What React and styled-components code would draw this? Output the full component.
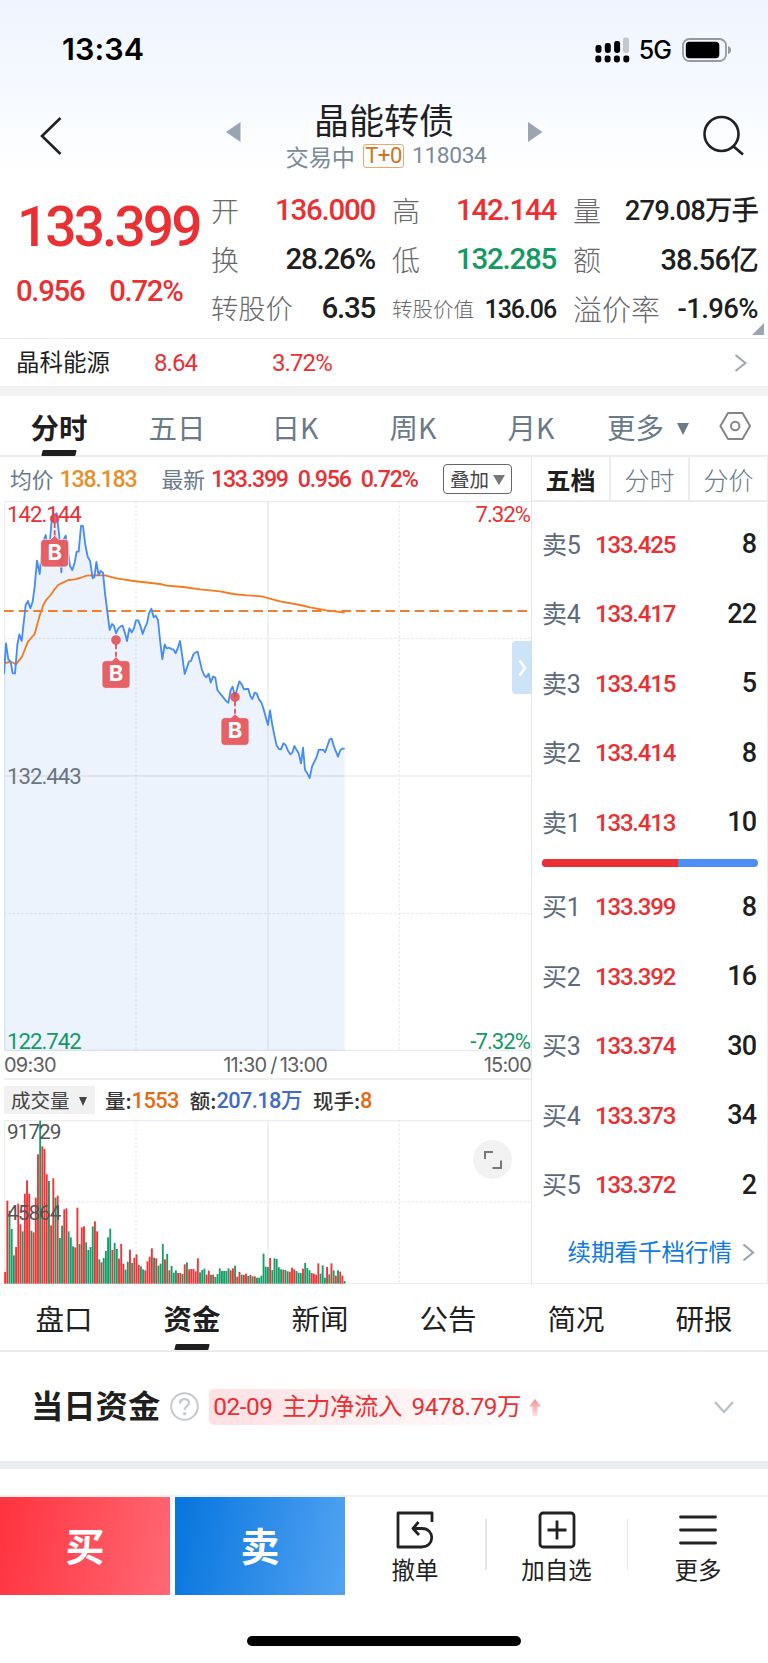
import React from "react";
import styled, { createGlobalStyle } from "styled-components";

const RED = "#ea3033";
const GREEN = "#139a64";
const INK = "#1f1f1f";
const SLATE = "#6b7a88";
const LINE = "#ededed";
const NUMERIC = 'Roboto, "Noto Sans CJK SC", sans-serif';

const GlobalStyle = createGlobalStyle`
  * { box-sizing: border-box; }
  body { margin: 0; background: #fff; }
`;

const Screen = styled.div`
  width: 768px;
  height: 1663px;
  overflow: hidden;
  display: flex;
  flex-direction: column;
  background: #fff;
  color: ${INK};
  font-family: "Noto Sans CJK SC", sans-serif;
  white-space: nowrap;
  line-height: 1;
`;

/* ---------- header ---------- */
const Header = styled.header`
  height: 186px;
  flex: none;
  background: linear-gradient(#eff4ff, #f5f9ff 45%, #fff 95%);
`;
const StatusBar = styled.div`
  height: 98px;
  padding: 1px 37px 0 62px;
  display: flex;
  align-items: center;
  color: #000;
  font-family: Inter, sans-serif;
`;
const Clock = styled.span`
  font-size: 30.5px;
  font-weight: 600;
  letter-spacing: 0.1px;
  margin-right: auto;
`;
const Network = styled.span`
  font-size: 25px;
  font-weight: 500;
  letter-spacing: -0.9px;
  margin: 2px 11px 0 9px;
`;
const NavBar = styled.div`
  height: 88px;
  display: flex;
  align-items: flex-start;
  justify-content: space-between;
  padding: 2px 23px 0 39px;
`;
const NavIcon = styled.svg`
  display: block;
  margin-top: 14px;
`;
const TitleGroup = styled.div`
  width: 318px;
  display: flex;
  justify-content: space-between;
  margin-right: -3px;
`;
const Arrow = styled.svg`
  margin-top: 21px;
`;
const TitleStack = styled.div`
  display: flex;
  flex-direction: column;
  align-items: center;
`;
const Title = styled.h1`
  margin: 0;
  font-size: 35px;
  font-weight: 400;
  line-height: 38px;
`;
const SubTitle = styled.div`
  display: flex;
  align-items: center;
  gap: 8px;
  margin: 5px 0 0 4px;
  font-size: 23.2px;
  line-height: 24px;
  color: #7c8a98;
`;
const TradeTag = styled.span`
  width: 41px;
  height: 24px;
  border: 1.5px solid #e9ab6c;
  border-radius: 3px;
  color: #d1761c;
  font-family: ${NUMERIC};
  font-size: 22px;
  line-height: 22px;
  text-align: center;
  letter-spacing: -0.4px;
`;
const Code = styled.span`
  font-family: ${NUMERIC};
  font-size: 22.8px;
  letter-spacing: -0.4px;
  padding-top: 1px;
`;

/* ---------- quote ---------- */
const Quote = styled.section`
  height: 153px;
  flex: none;
  display: flex;
  position: relative;
  border-bottom: 1px solid ${LINE};
`;
const PriceBlock = styled.div`
  width: 211px;
  color: ${RED};
  padding-left: 17px;
  font-family: ${NUMERIC};
`;
const Price = styled.div`
  font-size: 55px;
  font-weight: 500;
  letter-spacing: -2.9px;
  line-height: 60px;
  margin-top: 11px;
`;
const Changes = styled.div`
  display: flex;
  gap: 25px;
  font-size: 29.3px;
  font-weight: 500;
  line-height: 30px;
  margin: 19px 0 0 -1px;
  letter-spacing: -1.3px;
`;
const QuoteGrid = styled.div`
  display: grid;
  grid-template-columns: 164px 164px 185px;
  column-gap: 17px;
  grid-template-rows: repeat(3, 49px);
`;
const QuoteCell = styled.div`
  display: flex;
  justify-content: space-between;
  align-items: center;
  padding: 0 0 1px;
`;
const QuoteLabel = styled.span`
  font-size: ${(p) => p.$size || 28}px;
  font-weight: 300;
  color: #686868;
`;
const QuoteValue = styled.span`
  font-family: ${NUMERIC};
  font-size: ${(p) => p.$size || 29.5}px;
  font-weight: 500;
  letter-spacing: ${(p) => p.$track || -1.25}px;
  color: ${(p) => p.$color || INK};
  padding-top: 2px;
`;
const Corner = styled.svg`
  position: absolute;
  right: 4px;
  bottom: 3px;
`;
const StockRow = styled.div`
  height: 47px;
  flex: none;
  display: flex;
  align-items: center;
  padding: 0 21px 2px 16px;
`;
const StockName = styled.span`
  width: 138px;
  font-size: 23.5px;
  padding-top: 1px;
`;
const StockFigure = styled.span`
  width: ${(p) => p.$w}px;
  font-family: ${NUMERIC};
  font-size: 24px;
  color: ${RED};
  letter-spacing: -0.9px;
  padding-top: 2px;
`;
const PushRight = styled.svg`
  margin-left: auto;
  margin-top: 2px;
`;
const Band = styled.div`
  height: ${(p) => p.$h}px;
  flex: none;
  background: ${(p) => p.$color};
`;

/* ---------- period tabs ---------- */
const PeriodTabs = styled.nav`
  height: 61px;
  flex: none;
  display: flex;
  border-bottom: 2px solid ${LINE};
`;
const PeriodTab = styled.div`
  position: relative;
  width: ${(p) => p.$w || 118}px;
  height: 60px;
  display: flex;
  align-items: center;
  justify-content: center;
  gap: 13px;
  padding-top: 2px;
  font-size: 28.5px;
  font-weight: ${(p) => (p.$on ? 700 : 400)};
  color: ${(p) => (p.$on ? INK : SLATE)};
  &::after {
    content: "";
    display: ${(p) => (p.$on ? "block" : "none")};
    position: absolute;
    bottom: 0;
    left: 42px;
    width: 34px;
    height: 6px;
    background: ${INK};
    transform: skewX(-14deg);
    border-radius: 1px;
  }
`;
const DownMark = styled.i`
  border: ${(p) => p.$w / 2}px solid transparent;
  border-bottom: 0;
  border-top: ${(p) => p.$h}px solid ${(p) => p.$color};
  margin-top: ${(p) => p.$top || 0}px;
`;

/* ---------- chart area ---------- */
const Market = styled.section`
  flex: none;
  height: 827px;
  display: flex;
  border-bottom: 1px solid ${LINE};
`;
const ChartSide = styled.div`
  width: 532px;
  padding-left: 4px;
  position: relative;
  border-right: 1px solid #e4e6e8;
`;
const InfoRow = styled.div`
  height: 44px;
  display: flex;
  align-items: center;
  padding: 0 19px 0 6px;
  font-size: 21.8px;
  color: ${SLATE};
`;
const InfoValue = styled.span`
  font-family: ${NUMERIC};
  font-size: 23.2px;
  font-weight: 500;
  letter-spacing: -1.25px;
  color: ${(p) => p.$color};
  margin-left: ${(p) => p.$ml}px;
  padding-top: 2px;
`;
const InfoLabel = styled.span`
  margin-left: ${(p) => p.$ml || 0}px;
`;
const Overlay = styled.div`
  margin-left: auto;
  width: 69px;
  height: 30px;
  border: 1.5px solid #666;
  border-radius: 4px;
  display: flex;
  align-items: center;
  justify-content: center;
  gap: 4px;
  padding-bottom: 1px;
  font-size: 19.5px;
  color: #444;
`;
const PlotBox = styled.div`
  position: relative;
  height: ${(p) => p.$h}px;
`;
const Plot = styled.svg`
  display: block;
`;
const MarkerLayer = styled.svg`
  position: absolute;
  left: 0;
  top: 0;
`;
const AxisMark = styled.span`
  position: absolute;
  ${(p) => (p.$right ? "right: 1px;" : `left: ${p.$left || 3}px;`)}
  top: ${(p) => p.$top}px;
  font-family: ${NUMERIC};
  font-size: ${(p) => p.$size || 22.2}px;
  line-height: 18px;
  letter-spacing: -1px;
  color: ${(p) => p.$color};
`;
const TimeAxis = styled.div`
  height: 29px;
  display: flex;
  justify-content: space-between;
  align-items: center;
  padding: 0;
  border-bottom: 2px solid #f0f0f0;
  font-family: Inter, sans-serif;
  font-size: 20px;
  letter-spacing: -0.8px;
  color: #606060;
`;
const MidTime = styled.span`
  padding-left: 11px;
`;
const Slash = styled.span`
  margin: 0 3px 0 4px;
`;
const VolumeHead = styled.div`
  height: 40px;
  display: flex;
  align-items: center;
  font-size: 20.5px;
`;
const Indicator = styled.div`
  width: 91px;
  height: 28px;
  background: #f1f1f1;
  color: #444;
  font-size: 19.5px;
  display: flex;
  align-items: center;
  gap: 9px;
  padding: 0 0 1px 7px;
  margin-right: 10px;
`;
const VolumeItem = styled.span`
  display: flex;
  align-items: center;
  font-weight: 500;
  color: #333;
  margin-right: 11px;
`;
const VolumeValue = styled.span`
  font-family: ${NUMERIC};
  font-weight: 500;
  font-size: 21.8px;
  letter-spacing: -0.6px;
  color: ${(p) => p.$color};
  padding-top: 1px;
`;
const SideHandle = styled.div`
  position: absolute;
  right: -1px;
  top: 184px;
  width: 20px;
  height: 53px;
  border-radius: 4px 0 0 4px;
  background: #cde3f8;
  display: flex;
  align-items: center;
  justify-content: center;
`;
const Expand = styled.div`
  position: absolute;
  left: 469px;
  top: 20px;
  width: 39px;
  height: 39px;
  border-radius: 50%;
  background: #f2f2f2;
  display: flex;
  align-items: center;
  justify-content: center;
`;

/* ---------- order book ---------- */
const Book = styled.aside`
  width: 236px;
  border-right: 1px solid ${LINE};
`;
const BookTabs = styled.div`
  height: 45px;
  display: flex;
  border-bottom: 2px solid ${LINE};
`;
const BookTab = styled.div`
  flex: 1;
  display: flex;
  align-items: center;
  justify-content: center;
  padding-top: 2px;
  font-size: 25px;
  font-weight: ${(p) => (p.$on ? 700 : 300)};
  color: ${(p) => (p.$on ? INK : SLATE)};
  & + & { border-left: 2px solid ${LINE}; }
`;
const Levels = styled.div`
  padding-top: ${(p) => p.$top}px;
`;
const Level = styled.div`
  height: 69.5px;
  display: flex;
  align-items: center;
  padding: 0 11px 0 10px;
`;
const LevelName = styled.span`
  width: 53px;
  font-family: ${NUMERIC};
  font-size: 25px;
  letter-spacing: -0.3px;
  color: #5d6b7a;
  padding-top: 1px;
`;
const LevelPrice = styled.span`
  font-family: ${NUMERIC};
  font-size: 24px;
  font-weight: 500;
  letter-spacing: -1.2px;
  color: ${RED};
`;
const LevelQty = styled.span`
  margin-left: auto;
  font-family: ${NUMERIC};
  font-size: 27px;
  font-weight: 500;
  letter-spacing: -1px;
`;
const Ratio = styled.div`
  height: 8px;
  margin: 1px 9px 0 10px;
  border-radius: 4px;
  overflow: hidden;
  display: flex;
  background: #4c8df6;
`;
const RatioSell = styled.div`
  width: 136px;
  background: #ea3033;
`;
const MoreDepth = styled.div`
  height: 62px;
  padding: 2px 12px 0 0;
  display: flex;
  align-items: center;
  justify-content: flex-end;
  gap: 10px;
  color: #0f7ae0;
  font-size: 23.5px;
`;

/* ---------- detail tabs & funds ---------- */
const DetailTabs = styled.nav`
  height: 68px;
  flex: none;
  display: flex;
  border-bottom: 2px solid #ececec;
`;
const DetailTab = styled.div`
  position: relative;
  flex: 1;
  display: flex;
  align-items: center;
  justify-content: center;
  padding-top: 3px;
  font-size: 28.5px;
  font-weight: ${(p) => (p.$on ? 700 : 400)};
  &::after {
    content: "";
    display: ${(p) => (p.$on ? "block" : "none")};
    position: absolute;
    bottom: 0;
    left: 47px;
    width: 34px;
    height: 6px;
    background: ${INK};
    transform: skewX(-14deg);
    border-radius: 1px;
  }
`;
const Funds = styled.section`
  height: 109px;
  flex: none;
  display: flex;
  align-items: center;
  padding: 0 34px 0 31px;
`;
const FundsTitle = styled.h2`
  margin: 0 10px 4px 0;
  font-size: 32.3px;
  font-weight: 700;
`;
const FlowPill = styled.div`
  margin-left: 10px;
  width: 340px;
  height: 36px;
  padding: 1px 0 0 4px;
  border-radius: 5px;
  display: flex;
  align-items: center;
  gap: 8px;
  font-family: ${NUMERIC};
  font-size: 24.4px;
  letter-spacing: -0.45px;
  word-spacing: 4px;
  color: ${RED};
  background: linear-gradient(90deg, #ffe0e3, #fff0f1 50%, #fff);
`;

/* ---------- action bar ---------- */
const ActionBar = styled.footer`
  margin-top: 26px;
  height: 100px;
  flex: none;
  display: flex;
  border-top: 2px solid #f0f0f0;
`;
const TradeButton = styled.div`
  width: 170px;
  height: 98px;
  margin-right: ${(p) => p.$gap || 0}px;
  display: flex;
  align-items: center;
  justify-content: center;
  padding-bottom: 4px;
  font-size: 39px;
  font-weight: 700;
  color: #fff;
  background: linear-gradient(100deg, ${(p) => p.$from}, ${(p) => p.$to});
`;
const Action = styled.div`
  flex: 1;
  height: 98px;
  display: flex;
  flex-direction: column;
  align-items: center;
  padding-top: 14px;
  font-size: 23.5px;
`;
const ActionIcon = styled.svg`
  flex: none;
  width: 38px;
  height: 38px;
  fill: none;
  stroke: #222;
  stroke-width: 2.8px;
`;
const ActionText = styled.span`
  margin-top: 6px;
  line-height: 28px;
`;
const Rule = styled.i`
  width: 1.5px;
  height: 51px;
  margin-top: 22px;
  background: #e6e6e6;
`;
const HomeArea = styled.div`
  flex: 1;
  display: flex;
  justify-content: center;
  align-items: flex-end;
  padding-bottom: 17px;
`;
const HomeBar = styled.div`
  width: 274px;
  height: 10px;
  border-radius: 5px;
  background: #000;
`;

/* Series are in 1/3 px units, matching the plots' viewBox. */
const PRICE = "12,552 18,460 25,508 32,515 38,550 45,550 52,465 58,433 65,453 77,345 84,333 91,355 98,335 104,290 111,212 119,252 128,160 137,135 143,170 150,150 156,80 170,70 178,140 184,247 190,150 197,137 203,180 210,228 217,240 224,218 230,185 236,185 243,108 249,108 256,165 263,200 270,212 278,265 283,262 289,216 296,255 302,243 309,248 315,310 322,365 329,420 336,402 342,408 348,430 355,415 362,409 368,407 375,430 381,453 388,415 395,427 402,415 408,391 415,391 422,410 428,432 435,412 441,400 447,370 454,356 461,382 467,377 474,390 480,450 487,508 494,463 500,475 508,473 515,478 520,478 527,490 534,472 540,453 547,500 554,552 560,535 567,515 573,513 580,493 587,487 593,485 600,515 606,540 613,556 619,562 626,551 632,578 639,560 646,563 652,600 660,610 668,620 678,633 685,638 692,600 698,590 705,620 711,598 718,574 725,583 732,598 739,597 745,597 751,618 757,627 764,608 770,610 777,628 784,637 790,655 797,680 804,705 810,661 817,705 824,740 830,767 837,777 843,778 850,760 857,765 864,782 871,793 877,788 883,768 890,780 896,790 903,820 909,773 915,840 922,850 929,864 936,830 943,815 949,803 956,780 962,779 970,780 975,787 982,768 989,748 995,746 1002,770 1008,785 1014,800 1021,780 1028,776 1034,776";
const AVERAGE = "12,520 28,516 40,518 47,524 66,500 84,455 104,432 118,380 130,345 140,328 152,315 164,298 174,285 190,277 206,270 224,268 240,264 260,257 280,256 315,256 350,265 400,273 480,282 500,287 550,291 600,298 660,304 700,312 740,316 785,319 840,334 900,345 930,352 980,361 1034,368";
const VOLUME = "r35 r249 g219 g164 g85 r110 r240 r178 g157 r270 r310 r270 g159 r154 r258 r388 g489 r412 r404 r328 g308 r175 r316 g258 r264 g137 g174 r223 r226 g157 g139 g112 r109 r228 g119 r169 r172 g124 g101 g110 g172 r187 r157 g73 r64 g77 g98 g139 g165 r101 g122 g104 r75 r119 r60 g42 g66 r102 g62 r78 r88 r56 g52 g43 r40 r67 r81 r106 g78 r76 g54 g60 g119 r73 g89 r40 g53 g33 g40 r32 r32 g29 r58 g64 r43 r44 r44 r37 r76 g34 g41 g45 r27 r39 g27 r27 g20 g29 g46 g38 g38 g38 g46 r40 r46 g54 r21 r35 g27 r26 r30 g23 r26 g22 r22 g18 g18 g24 g90 g51 g50 r77 g41 g76 g74 g49 g43 r42 g41 g37 r36 r48 r43 g38 g33 g32 r45 g62 g47 g40 r32 r30 r26 r61 g30 g55 g18 r50 g28 r61 g40 r24 g40 r36 r24 g8"
  .split(" ")
  .map((s) => ({ up: s[0] === "r", h: Number(s.slice(1)) }));

const BUYS = [[164, 86], [348, 450], [705, 621]];

const QUOTES = [
  ["开", "136.000", { $color: RED }],
  ["高", "142.144", { $color: RED }],
  ["量", "279.08万手", { $size: 27.5, $track: -0.95 }],
  ["换", "28.26%", {}],
  ["低", "132.285", { $color: GREEN }],
  ["额", "38.56亿", { $size: 28.8, $track: -0.8 }],
  ["转股价", "6.35", {}, 27.3],
  ["转股价值", "136.06", { $size: 25, $track: -1.1 }, 20.5],
  ["溢价率", "-1.96%", { $size: 27.5, $track: -0.6 }, 29],
];
const SELLS = [["卖5", "133.425", 8], ["卖4", "133.417", 22], ["卖3", "133.415", 5], ["卖2", "133.414", 8], ["卖1", "133.413", 10]];
const BIDS = [["买1", "133.399", 8], ["买2", "133.392", 16], ["买3", "133.374", 30], ["买4", "133.373", 34], ["买5", "133.372", 2]];

function BuyMarker({ x, y }) {
  return (
    <g>
      <line x1={x} x2={x} y1={y + 12} y2={y + 56} stroke="#e0474d" strokeWidth="5" strokeDasharray="16 7" />
      <circle cx={x} cy={y} r="14.5" fill="#e0474d" fillOpacity="0.85" />
      <path
        d={`M${x - 31} ${y + 62}h19l12 -12l12 12h19q11 0 11 11v61q0 11 -11 11h-62q-11 0 -11 -11v-61q0 -11 11 -11z`}
        fill="#e5585d"
        fillOpacity="0.95"
        stroke="#fff"
        strokeOpacity="0.7"
        strokeWidth="3"
      />
      <text x={x} y={y + 124} textAnchor="middle" fontFamily="Inter, sans-serif" fontSize="66" fontWeight="700" fill="#fff">B</text>
    </g>
  );
}

function Grid({ top, height, rows }) {
  const dash = { stroke: "#e3e5e8", strokeWidth: 3, strokeDasharray: "7 6" };
  const solid = { stroke: "#ebecee", strokeWidth: 4 };
  return (
    <g>
      <path d={`M13.5 ${top}v${height}M804 ${top}v${height}M12 ${top + 2}h1581`} {...solid} fill="none" />
      <path d={`M408 ${top}v${height}M1198 ${top}v${height}`} {...dash} fill="none" />
      {rows.map(([y, kind]) => (
        <path key={y} d={`M12 ${y}h1581`} {...(kind === "dash" ? dash : solid)} />
      ))}
    </g>
  );
}

function Chevron({ w, h, color, sw = 2.4 }) {
  return (
    <svg width={w} height={h}>
      <path d={`M1.5 1.5L${w - 2} ${h / 2}L1.5 ${h - 1.5}`} fill="none" stroke={color} strokeWidth={sw} />
    </svg>
  );
}

function LevelList({ rows }) {
  return rows.map(([name, price, qty]) => (
    <Level key={name}>
      <LevelName>{name}</LevelName>
      <LevelPrice>{price}</LevelPrice>
      <LevelQty>{qty}</LevelQty>
    </Level>
  ));
}

export default function App() {
  return (
    <Screen>
      <GlobalStyle />
      <Header>
        <StatusBar>
          <Clock>13:34</Clock>
          <svg width="35" height="26">
            {[[0, 8, 8], [9.3, 6, 10], [18.6, 4, 12]].map(([x, y, h]) => (
              <rect key={x} x={x + 0.5} y={y} width="6" height={h} rx="2.4" />
            ))}
            <rect x="28" y="0.5" width="6" height="15.5" rx="2.4" fill="#c3c8cf" />
            {[0, 9.3, 18.6, 28].map((x) => (
              <rect key={x} x={x + 0.3} y="18.5" width="6" height="7" rx="2.4" />
            ))}
          </svg>
          <Network>5G</Network>
          <svg width="49" height="24">
            <rect x="1" y="1" width="43" height="22" rx="6.5" fill="none" stroke="#9599a0" strokeWidth="1.8" />
            <rect x="3.8" y="3.8" width="33.5" height="16.4" rx="3.6" />
            <path d="M46 8q3 1 3 4t-3 4z" fill="#9599a0" />
          </svg>
        </StatusBar>
        <NavBar>
          <NavIcon width="24" height="44">
            <path d="M21.5 4L3 22L21.5 40" fill="none" stroke="#222" strokeWidth="2.6" />
          </NavIcon>
          <TitleGroup>
            <Arrow width="16" height="22"><path d="M15.5 1v20L1 11z" fill="#9aa5b1" /></Arrow>
            <TitleStack>
              <Title>晶能转债</Title>
              <SubTitle>
                <span>交易中</span>
                <TradeTag>T+0</TradeTag>
                <Code>118034</Code>
              </SubTitle>
            </TitleStack>
            <Arrow width="16" height="22"><path d="M1 1v20L15.5 11z" fill="#9aa5b1" /></Arrow>
          </TitleGroup>
          <NavIcon width="43" height="44">
            <circle cx="19.5" cy="20" r="17" fill="none" stroke="#222" strokeWidth="2.6" />
            <path d="M31 32L41 40.5" stroke="#222" strokeWidth="2.8" />
          </NavIcon>
        </NavBar>
      </Header>

      <Quote>
        <PriceBlock>
          <Price>133.399</Price>
          <Changes><span>0.956</span><span>0.72%</span></Changes>
        </PriceBlock>
        <QuoteGrid>
          {QUOTES.map(([label, value, style, size]) => (
            <QuoteCell key={label}>
              <QuoteLabel $size={size}>{label}</QuoteLabel>
              <QuoteValue {...style}>{value}</QuoteValue>
            </QuoteCell>
          ))}
        </QuoteGrid>
        <Corner width="12" height="12"><path d="M12 0v12H0z" fill="#9aa5b1" /></Corner>
      </Quote>

      <StockRow>
        <StockName>晶科能源</StockName>
        <StockFigure $w={118}>8.64</StockFigure>
        <StockFigure $w={80}>3.72%</StockFigure>
        <PushRight width="13" height="18">
          <path d="M1.5 1L11.5 9L1.5 17" fill="none" stroke="#9aa5b1" strokeWidth="2" />
        </PushRight>
      </StockRow>
      <Band $h={10} $color="#f2f2f2" />

      <PeriodTabs>
        <PeriodTab $on>分时</PeriodTab>
        <PeriodTab>五日</PeriodTab>
        <PeriodTab>日K</PeriodTab>
        <PeriodTab>周K</PeriodTab>
        <PeriodTab>月K</PeriodTab>
        <PeriodTab $w={116}>更多<DownMark $w={12} $h={12} $color={SLATE} $top={4} /></PeriodTab>
        <PeriodTab $w={57}>
          <svg width="32" height="30">
            <path d="M9 1H23.5L31 14L23.5 27H9L1.4 14z" fill="none" stroke="#858585" strokeWidth="2" strokeLinejoin="round" />
            <circle cx="16.2" cy="14" r="4.2" fill="none" stroke="#858585" strokeWidth="2" />
          </svg>
        </PeriodTab>
      </PeriodTabs>

      <Market>
        <ChartSide>
          <InfoRow>
            <InfoLabel>均价</InfoLabel>
            <InfoValue $color="#e8902c" $ml={6}>138.183</InfoValue>
            <InfoLabel $ml={25}>最新</InfoLabel>
            <InfoValue $color={RED} $ml={6}>133.399</InfoValue>
            <InfoValue $color={RED} $ml={10}>0.956</InfoValue>
            <InfoValue $color={RED} $ml={10}>0.72%</InfoValue>
            <Overlay>叠加<DownMark $w={12} $h={10} $color="#777" $top={2} /></Overlay>
          </InfoRow>

          <PlotBox $h={550}>
            <Plot width="527" height="550" viewBox="12 33 1581 1650">
              <Grid top={33} height={1650} rows={[[445, "dash"], [858, "solid"], [1271, "dash"], [1681, "solid"]]} />
              <polygon points={`12,1683 ${PRICE} 1034,1683`} fill="#4a8bf0" fillOpacity="0.105" />
              <polyline points={AVERAGE} fill="none" stroke="#f8791c" strokeWidth="5.5" strokeLinejoin="round" />
              <path d="M12 363H1593" stroke="#f08030" strokeWidth="6" strokeDasharray="29 15" />
              <polyline points={PRICE} fill="none" stroke="#468cf7" strokeWidth="5.5" strokeLinejoin="round" />
            </Plot>
            <AxisMark $top={4} $color={RED}>142.144</AxisMark>
            <AxisMark $top={4} $right $color={RED}>7.32%</AxisMark>
            <AxisMark $top={266} $color="#6b757e">132.443</AxisMark>
            <AxisMark $top={531} $color={GREEN}>122.742</AxisMark>
            <AxisMark $top={531} $right $color={GREEN}>-7.32%</AxisMark>
            <MarkerLayer width="527" height="550" viewBox="12 33 1581 1650">
              {BUYS.map(([x, y]) => <BuyMarker key={x} x={x} y={y} />)}
            </MarkerLayer>
          </PlotBox>

          <TimeAxis>
            <span>09:30</span>
            <MidTime>11:30<Slash>/</Slash>13:00</MidTime>
            <span>15:00</span>
          </TimeAxis>

          <VolumeHead>
            <Indicator>成交量<DownMark $w={8} $h={9} $color="#444" $top={3} /></Indicator>
            <VolumeItem>量:<VolumeValue $color="#e56a10">1553</VolumeValue></VolumeItem>
            <VolumeItem>额:<VolumeValue $color="#3f6cc4">207.18万</VolumeValue></VolumeItem>
            <VolumeItem>现手:<VolumeValue $color="#e56a10">8</VolumeValue></VolumeItem>
          </VolumeHead>

          <PlotBox $h={164}>
            <Plot width="527" height="164" viewBox="12 0 1581 492">
              <Grid top={0} height={492} rows={[[246, "dash"]]} />
              {VOLUME.map(({ up, h }, i) => (
                <rect key={i} x={12.6 + i * 6.57} y={491 - h} width="5.6" height={h} fill={up ? "#ee3436" : "#189c68"} />
              ))}
            </Plot>
            <AxisMark $top={3} $size={20.8} $color="#555">91729</AxisMark>
            <AxisMark $top={84} $size={20.8} $color="#555">45864</AxisMark>
            <Expand>
              <svg width="20" height="20"><path d="M2 9V2H10M18 10.500V18H9.500" fill="none" stroke="#777" strokeWidth="2" /></svg>
            </Expand>
          </PlotBox>
          <SideHandle><Chevron w={9} h={18} color="#fff" /></SideHandle>
        </ChartSide>

        <Book>
          <BookTabs>
            <BookTab $on>五档</BookTab>
            <BookTab>分时</BookTab>
            <BookTab>分价</BookTab>
          </BookTabs>
          <Levels $top={8}><LevelList rows={SELLS} /></Levels>
          <Ratio><RatioSell /></Ratio>
          <Levels $top={6}><LevelList rows={BIDS} /></Levels>
          <MoreDepth>
            续期看千档行情
            <Chevron w={13} h={19} color="#9aa5b1" sw={2.2} />
          </MoreDepth>
        </Book>
      </Market>

      <DetailTabs>
        <DetailTab>盘口</DetailTab>
        <DetailTab $on>资金</DetailTab>
        <DetailTab>新闻</DetailTab>
        <DetailTab>公告</DetailTab>
        <DetailTab>简况</DetailTab>
        <DetailTab>研报</DetailTab>
      </DetailTabs>

      <Funds>
        <FundsTitle>当日资金</FundsTitle>
        <svg width="29" height="29">
          <circle cx="14.500" cy="14.500" r="13.300" fill="none" stroke="#c5cacf" strokeWidth="2" />
          <path d="M10 11.600Q10.100 7.200 14.500 7.200T19 11.200C19 14 14.600 14.200 14.600 18" fill="none" stroke="#c5cacf" strokeWidth="2.200" />
          <circle cx="14.600" cy="21.800" r="1.700" fill="#c5cacf" />
        </svg>
        <FlowPill>
          02-09 主力净流入 9478.79万
          <svg width="12" height="18">
            <defs>
              <linearGradient id="rise" x2="0" y2="1"><stop stopColor="#f58f92" /><stop offset="1" stopColor="#fde0e1" /></linearGradient>
            </defs>
            <path d="M6 1L12 8.500H8.500V18H3.500V8.500H0z" fill="url(#rise)" />
          </svg>
        </FlowPill>
        <PushRight width="20" height="13">
          <path d="M1 1L10 11L19 1" fill="none" stroke="#b9c0c7" strokeWidth="2.200" />
        </PushRight>
      </Funds>
      <Band $h={8} $color="#ebecef" />

      <ActionBar>
        <TradeButton $gap={5} $from="#ff333f" $to="#ff6874">买</TradeButton>
        <TradeButton $from="#0675de" $to="#52a3f2">卖</TradeButton>
        <Action>
          <ActionIcon viewBox="0 0 38 38">
            <path d="M36 11V2H2V36H25.500C39 36 39 17.500 26 17.500H17M22.500 11L17 17.500L23 24" strokeLinejoin="round" />
          </ActionIcon>
          <ActionText>撤单</ActionText>
        </Action>
        <Rule />
        <Action>
          <ActionIcon viewBox="0 0 38 38">
            <rect x="2" y="2" width="34" height="34" rx="3" />
            <path d="M19 9.500V28.500M9.500 19H28.500" />
          </ActionIcon>
          <ActionText>加自选</ActionText>
        </Action>
        <Rule />
        <Action>
          <ActionIcon viewBox="0 0 38 38" strokeLinecap="round">
            <path d="M1.500 6H36.500M1.500 19H36.500M1.500 32H36.500" />
          </ActionIcon>
          <ActionText>更多</ActionText>
        </Action>
      </ActionBar>
      <HomeArea><HomeBar /></HomeArea>
    </Screen>
  );
}
